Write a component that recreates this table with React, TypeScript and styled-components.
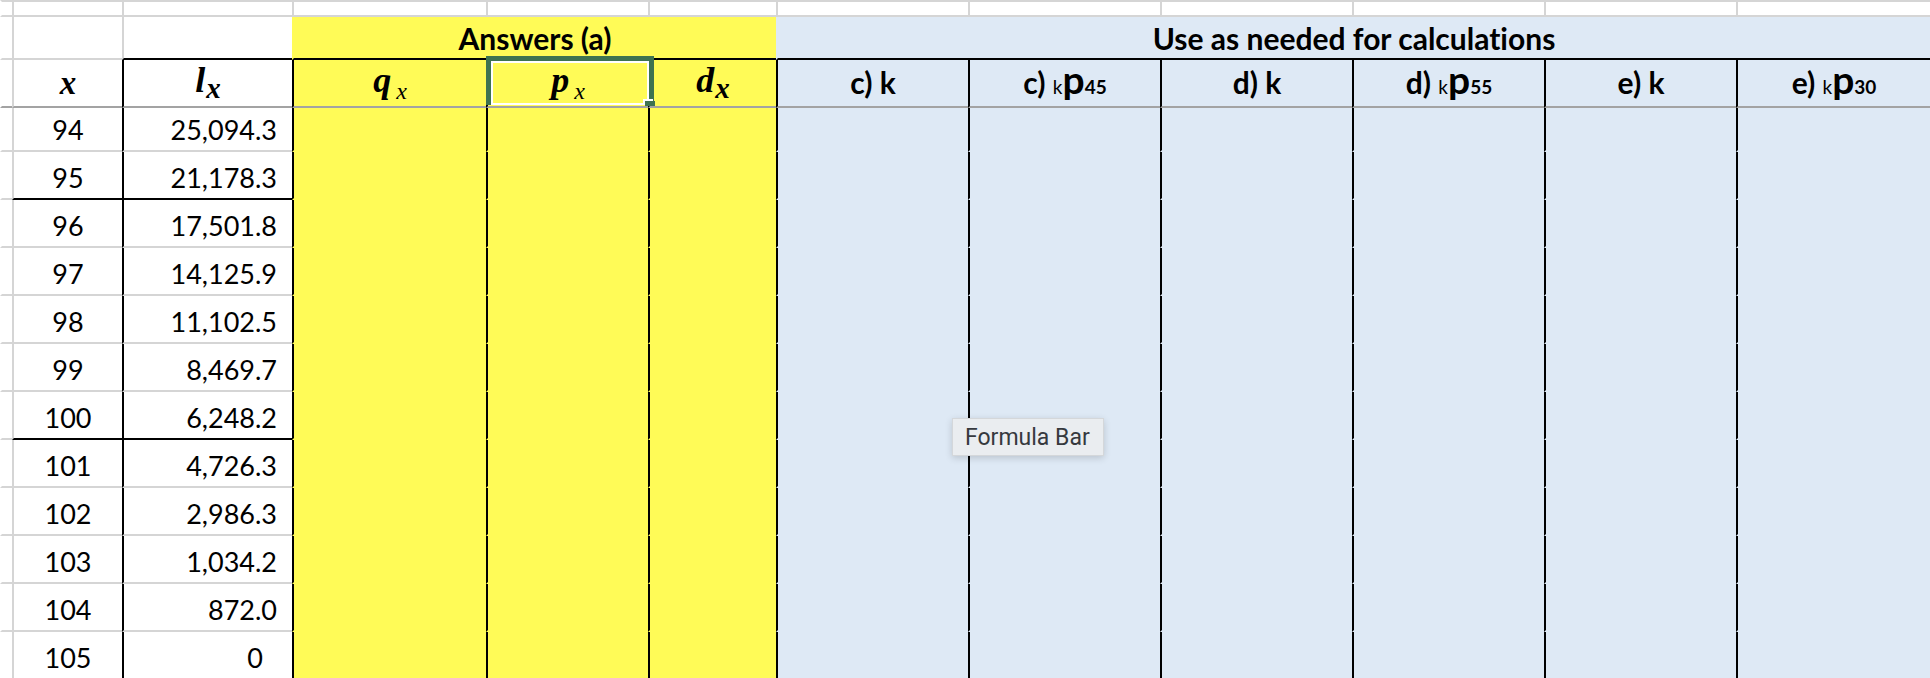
import React from 'react';
import styled, { createGlobalStyle } from 'styled-components';

const GRID = '#d5d5d5';
const DIVIDER = '#a3a3a3';
const BLACK = '#000000';
const YELLOW = '#fffb57';
const BLUE = '#dee9f5';
const SEL = '#3e7350';

type Line = 'none' | 'grid' | 'black' | 'divider';
type Fill = 'white' | 'yellow' | 'blue';
type Align = 'left' | 'center' | 'right';

const lineColor = (l: Line = 'none') =>
  l === 'grid' ? GRID : l === 'black' ? BLACK : l === 'divider' ? DIVIDER : 'transparent';

const fillColor = (f: Fill = 'white') => (f === 'yellow' ? YELLOW : f === 'blue' ? BLUE : '#ffffff');

const GlobalStyle = createGlobalStyle`
  html, body { margin: 0; padding: 0; background: #ffffff; overflow: hidden; }
  #root { width: 1930px; height: 678px; overflow: hidden; }
`;

const Sheet = styled.div`
  position: relative;
  display: grid;
  grid-template-columns: 12px 110px 170px 194px 162px 128px repeat(5, 192px) 194px;
  grid-template-rows: 17px 43px 48px 44px repeat(11, 48px);
  width: 1930px;
  height: 678px;
  overflow: hidden;
  font-family: Lato, 'Open Sans', sans-serif;
  font-variant-ligatures: none;
  color: #000;
`;

const Cell = styled.div<{
  $left?: Line;
  $bottom?: Line;
  $top?: Line;
  $fill?: Fill;
  $align?: Align;
  $span?: number;
  $pr?: number;
  $pb?: number;
}>`
  box-sizing: border-box;
  position: relative;
  grid-column: span ${(p) => p.$span ?? 1};
  display: flex;
  align-items: flex-end;
  justify-content: ${(p) => (p.$align === 'right' ? 'flex-end' : p.$align === 'left' ? 'flex-start' : 'center')};
  background: ${(p) => fillColor(p.$fill)};
  border-left: 2px solid ${(p) => lineColor(p.$left)};
  border-bottom: 2px solid ${(p) => lineColor(p.$bottom)};
  border-top: ${(p) => (p.$top ? `2px solid ${lineColor(p.$top)}` : '0')};
  padding-right: ${(p) => p.$pr ?? 0}px;
  padding-bottom: ${(p) => p.$pb ?? 0}px;
  white-space: nowrap;
`;

const Value = styled.span`
  font-family: Lato, 'Open Sans', sans-serif;
  font-size: 27px;
  line-height: 1;
`;

const GroupTitle = styled.span`
  font-family: Lato, 'Open Sans', sans-serif;
  font-weight: 700;
  font-size: 30px;
  line-height: 1;
`;

const ColTitle = styled.span`
  font-family: Lato, 'Open Sans', sans-serif;
  font-weight: 700;
  font-size: 30px;
  line-height: 1;
`;

const SmallK = styled.span`
  font-weight: 400;
  font-size: 19px;
`;

const BigP = styled.span`
  font-weight: 700;
  font-size: 39px;
  line-height: 0;
`;

const SmallNum = styled.span`
  font-weight: 700;
  font-size: 19px;
`;

const MathTitle = styled.span<{ $size?: number }>`
  font-family: 'Liberation Serif', 'Times New Roman', serif;
  font-weight: 700;
  font-style: italic;
  font-size: ${(p) => p.$size ?? 36}px;
  line-height: 1;
`;

const MathSub = styled.span<{ $bold?: boolean }>`
  font-weight: ${(p) => (p.$bold ? 700 : 400)};
  font-size: ${(p) => (p.$bold ? 29 : 24)}px;
  position: relative;
  top: ${(p) => (p.$bold ? 6 : 7)}px;
  margin-left: ${(p) => (p.$bold ? 1 : 5)}px;
`;

const Selection = styled.div`
  position: absolute;
  left: -2px;
  top: -4px;
  width: 168px;
  height: 49px;
  box-sizing: border-box;
  border: 5px solid ${SEL};
  border-bottom: 0;
  box-shadow: inset 0 0 0 2px #ffffff;
  z-index: 2;
  pointer-events: none;
`;

const FillHandle = styled.div`
  position: absolute;
  left: 154px;
  top: 40px;
  width: 10px;
  height: 5px;
  background: ${SEL};
  box-shadow: -2px -2px 0 0 #ffffff;
`;

const Tooltip = styled.div`
  position: absolute;
  left: 952px;
  top: 418px;
  width: 152px;
  height: 38px;
  box-sizing: border-box;
  display: flex;
  align-items: center;
  padding-left: 12px;
  background: #eaedf0;
  border: 1px solid rgba(0, 0, 0, 0.09);
  box-shadow: 0 2px 7px rgba(0, 0, 0, 0.16);
  font-family: Roboto, 'Liberation Sans', sans-serif;
  font-size: 23px;
  color: #36393e;
  z-index: 3;
`;

const rows: { x: number; lx: string; strong?: boolean; pad?: number }[] = [
  { x: 94, lx: '25,094.3' },
  { x: 95, lx: '21,178.3', strong: true },
  { x: 96, lx: '17,501.8' },
  { x: 97, lx: '14,125.9' },
  { x: 98, lx: '11,102.5' },
  { x: 99, lx: '8,469.7' },
  { x: 100, lx: '6,248.2', strong: true },
  { x: 101, lx: '4,726.3' },
  { x: 102, lx: '2,986.3' },
  { x: 103, lx: '1,034.2' },
  { x: 104, lx: '872.0' },
  { x: 105, lx: '0', pad: 29 },
];

const calcHeads: { label: string; sub?: string }[] = [
  { label: 'c)' },
  { label: 'c)', sub: '45' },
  { label: 'd)' },
  { label: 'd)', sub: '55' },
  { label: 'e)' },
  { label: 'e)', sub: '30' },
];

const CalcHead: React.FC<{ label: string; sub?: string }> = ({ label, sub }) => (
  <ColTitle>
    {label}{' '}
    {sub ? (
      <>
        <SmallK>k</SmallK>
        <BigP>p</BigP>
        <SmallNum>{sub}</SmallNum>
      </>
    ) : (
      'k'
    )}
  </ColTitle>
);

export default function App() {
  return (
    <>
      <GlobalStyle />
      <Sheet>
        {/* Row 0: empty */}
        <Cell $top="grid" $bottom="grid" />
        {Array.from({ length: 11 }).map((_, i) => (
          <Cell key={`r0-${i}`} $top="grid" $bottom="grid" $left="grid" />
        ))}

        {/* Row 1: group titles */}
        <Cell $bottom="grid" />
        <Cell $left="grid" $bottom="grid" />
        <Cell $left="grid" $bottom="black" />
        <Cell $span={3} $fill="yellow" $bottom="black" $pb={5}>
          <GroupTitle>Answers (a)</GroupTitle>
        </Cell>
        <Cell $span={6} $fill="blue" $bottom="black" $pb={5}>
          <GroupTitle>Use as needed for calculations</GroupTitle>
        </Cell>

        {/* Row 2: column titles */}
        <Cell $bottom="divider" />
        <Cell $left="grid" $bottom="divider" $pb={6}>
          <MathTitle $size={33}>x</MathTitle>
        </Cell>
        <Cell $left="black" $bottom="divider" $pb={8}>
          <MathTitle>
            l<MathSub $bold>x</MathSub>
          </MathTitle>
        </Cell>
        <Cell $left="black" $bottom="divider" $fill="yellow" $pb={8}>
          <MathTitle>
            q<MathSub>x</MathSub>
          </MathTitle>
        </Cell>
        <Cell $left="black" $bottom="divider" $fill="yellow" $pb={8}>
          <MathTitle>
            p<MathSub>x</MathSub>
          </MathTitle>
          <Selection>
            <FillHandle />
          </Selection>
        </Cell>
        <Cell $left="black" $bottom="divider" $fill="yellow" $pb={8}>
          <MathTitle>
            d<MathSub $bold>x</MathSub>
          </MathTitle>
        </Cell>
        {calcHeads.map((h, i) => (
          <Cell key={`h-${i}`} $left="black" $bottom="divider" $fill="blue" $pb={9}>
            <CalcHead label={h.label} sub={h.sub} />
          </Cell>
        ))}

        {/* Data rows */}
        {rows.map((r) => {
          const line: Line = r.strong ? 'black' : 'grid';
          return (
            <React.Fragment key={r.x}>
              <Cell $bottom="grid" />
              <Cell $left="grid" $bottom={line} $pb={7}>
                <Value>{r.x}</Value>
              </Cell>
              <Cell $left="black" $bottom={line} $align="right" $pr={r.pad ?? 15} $pb={7}>
                <Value>{r.lx}</Value>
              </Cell>
              {[0, 1, 2].map((i) => (
                <Cell key={`y-${i}`} $left="black" $fill="yellow" />
              ))}
              {[0, 1, 2, 3, 4, 5].map((i) => (
                <Cell key={`b-${i}`} $left="black" $fill="blue" />
              ))}
            </React.Fragment>
          );
        })}

        <Tooltip>Formula Bar</Tooltip>
      </Sheet>
    </>
  );
}
